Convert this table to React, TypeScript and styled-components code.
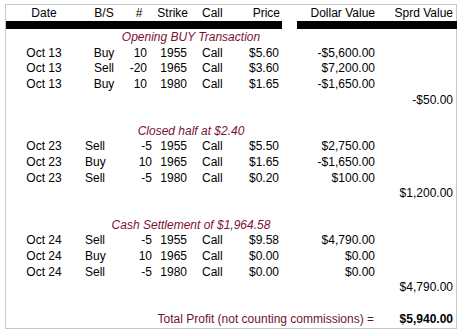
import React from "react";
import styled, { createGlobalStyle, css } from "styled-components";

interface Trade {
  date: string;
  side: string;
  qty: string;
  strike: string;
  type: string;
  price: string;
  value: string;
}

interface Section {
  title: string;
  open?: boolean;
  clip?: boolean;
  spread: string;
  trades: Trade[];
}

const sections: Section[] = [
  {
    title: "Opening BUY Transaction",
    open: true,
    spread: "-$50.00",
    trades: [
      { date: "Oct 13", side: "Buy", qty: "10", strike: "1955", type: "Call", price: "$5.60", value: "-$5,600.00" },
      { date: "Oct 13", side: "Sell", qty: "-20", strike: "1965", type: "Call", price: "$3.60", value: "$7,200.00" },
      { date: "Oct 13", side: "Buy", qty: "10", strike: "1980", type: "Call", price: "$1.65", value: "-$1,650.00" },
    ],
  },
  {
    title: "Closed half at $2.40",
    clip: true,
    spread: "$1,200.00",
    trades: [
      { date: "Oct 23", side: "Sell", qty: "-5", strike: "1955", type: "Call", price: "$5.50", value: "$2,750.00" },
      { date: "Oct 23", side: "Buy", qty: "10", strike: "1965", type: "Call", price: "$1.65", value: "-$1,650.00" },
      { date: "Oct 23", side: "Sell", qty: "-5", strike: "1980", type: "Call", price: "$0.20", value: "$100.00" },
    ],
  },
  {
    title: "Cash Settlement of $1,964.58",
    spread: "$4,790.00",
    trades: [
      { date: "Oct 24", side: "Sell", qty: "-5", strike: "1955", type: "Call", price: "$9.58", value: "$4,790.00" },
      { date: "Oct 24", side: "Buy", qty: "10", strike: "1965", type: "Call", price: "$0.00", value: "$0.00" },
      { date: "Oct 24", side: "Sell", qty: "-5", strike: "1980", type: "Call", price: "$0.00", value: "$0.00" },
    ],
  },
];

const GlobalStyle = createGlobalStyle`
  body {
    margin: 0;
    background: #fff;
    font-family: "Liberation Sans", Arial, sans-serif;
    font-size: 12px;
    color: #000;
  }
`;

const Page = styled.div`
  padding: 4px 0 0 5px;
`;

const Sheet = styled.div`
  box-sizing: border-box;
  width: 452px;
  height: 325px;
  border: 1px solid #c8c8c8;
`;

const Grid = styled.div<{ $row: number; $offset?: number }>`
  display: grid;
  grid-template-columns: 76px 44px 26px 36px 42px 50px 96px 79px;
  grid-auto-rows: ${(p) => p.$row}px;
  line-height: ${(p) => p.$row}px;
  margin-top: ${(p) => p.$offset ?? 0}px;
  white-space: nowrap;
`;

const Cell = styled.div<{ $align?: "left" | "center" | "right"; $pad?: number }>`
  text-align: ${(p) => p.$align ?? "left"};
  ${(p) =>
    p.$align === "right"
      ? css`padding-right: ${p.$pad ?? 0}px;`
      : css`padding-left: ${p.$pad ?? 0}px;`}
`;

const BarRow = styled.div`
  display: flex;
  gap: 15px;
  height: 8px;
`;

const Bar = styled.div<{ $width?: number }>`
  background: #000;
  ${(p) => (p.$width ? css`width: ${p.$width}px;` : css`flex: 1; margin-right: -1px;`)}
`;

const Title = styled.div<{ $clip?: boolean }>`
  grid-column: 1 / 8;
  text-align: center;
  font-style: italic;
  color: #7c1231;
  ${(p) =>
    p.$clip &&
    css`
      height: 13px;
      overflow: hidden;
    `}
`;

const SpreadCell = styled.div`
  grid-column: 8;
  text-align: right;
  padding-right: 2px;
`;

const Blank = styled.div`
  grid-column: 1 / -1;
`;

const TotalLabel = styled.div`
  grid-column: 1 / 8;
  text-align: right;
  padding-right: 2px;
  color: #6e1530;
`;

const TotalValue = styled.div`
  text-align: right;
  padding-right: 2px;
  font-weight: bold;
`;

const ROW = 15.65;

const TradeRow: React.FC<{ t: Trade; open?: boolean }> = ({ t, open }) => (
  <>
    <Cell $align="center">{t.date}</Cell>
    {open ? <Cell $align="center">{t.side}</Cell> : <Cell $pad={3}>{t.side}</Cell>}
    {open ? <Cell $align="right" $pad={5}>{t.qty}</Cell> : <Cell $align="right">{t.qty}</Cell>}
    <Cell $align="right" $pad={1}>{t.strike}</Cell>
    <Cell $pad={14}>{t.type}</Cell>
    <Cell $align="right" $pad={1}>{t.price}</Cell>
    <Cell $align="right" $pad={1}>{t.value}</Cell>
    <Cell />
  </>
);

export default function App() {
  return (
    <Page>
      <GlobalStyle />
      <Sheet>
        <Grid $row={16}>
          <Cell $align="center">Date</Cell>
          <Cell $align="center">B/S</Cell>
          <Cell $align="center">#</Cell>
          <Cell $align="right">Strike</Cell>
          <Cell $pad={14}>Call</Cell>
          <Cell $align="right">Price</Cell>
          <Cell $align="right" $pad={1}>Dollar Value</Cell>
          <Cell $align="right" $pad={2}>Sprd Value</Cell>
        </Grid>
        <BarRow>
          <Bar $width={276} />
          <Bar />
        </BarRow>
        <Grid $row={ROW} $offset={1}>
          {sections.map((s, i) => (
            <React.Fragment key={i}>
              <Title $clip={s.clip}>{s.title}</Title>
              <Cell />
              {s.trades.map((t, j) => (
                <TradeRow key={j} t={t} open={s.open} />
              ))}
              <SpreadCell>{s.spread}</SpreadCell>
              <Blank />
            </React.Fragment>
          ))}
          <TotalLabel>Total Profit (not counting commissions) =</TotalLabel>
          <TotalValue>$5,940.00</TotalValue>
        </Grid>
      </Sheet>
    </Page>
  );
}
